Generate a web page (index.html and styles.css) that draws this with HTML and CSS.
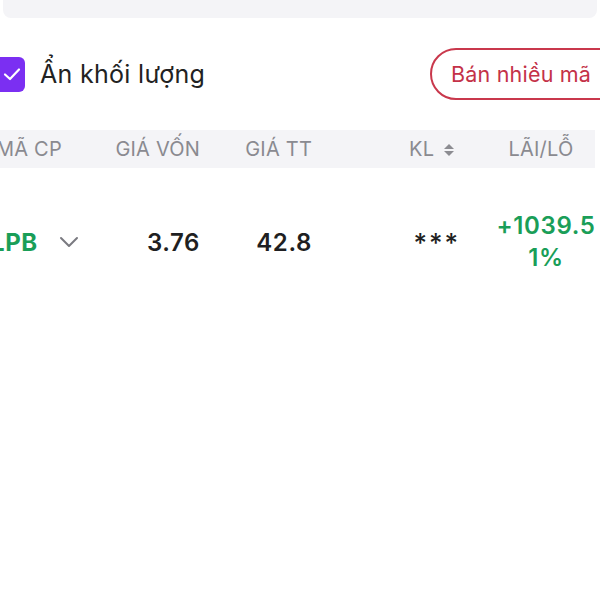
FILE: index.html
```html
<!DOCTYPE html>
<html lang="vi">
  <head>
    <meta charset="UTF-8" />
    <meta name="viewport" content="width=device-width, initial-scale=1.0" />
    <title>Danh mục</title>
    <link rel="stylesheet" href="styles.css">
  </head>
  <body>
    <div class="page">
      <div class="search-bar"></div>

      <div class="toolbar">
        <label class="check">
          <span class="check-box">
            <svg width="22" height="22" viewBox="0 0 22 22">
              <path d="M4 11.5 L9 16 L18 6.5" fill="none" stroke="#fff" stroke-width="2.2" stroke-linecap="round" stroke-linejoin="round" />
            </svg>
          </span>
          <span class="check-text">Ẩn khối lượng</span>
        </label>
        <button class="btn-sell">Bán nhiều mã</button>
      </div>

      <div class="table">
        <div class="row head">
          <div class="cell c-code">MÃ CP</div>
          <div class="cell c-cost">GIÁ VỐN</div>
          <div class="cell c-price">GIÁ TT</div>
          <div class="cell c-vol">
            KL
            <svg class="sort" width="12" height="14" viewBox="0 0 12 14">
              <path d="M6 1 L11 6 L1 6 Z" fill="#8c8c92" />
              <path d="M6 13 L11 8 L1 8 Z" fill="#8c8c92" />
            </svg>
          </div>
          <div class="cell c-pl">LÃI/LỖ</div>
        </div>

        <div class="row item">
          <div class="cell c-code">
            <span class="ticker">LPB</span>
            <svg class="chev" width="20" height="12" viewBox="0 0 20 12">
              <path d="M2 2 L10 10 L18 2" fill="none" stroke="#7a7a80" stroke-width="2" stroke-linecap="round" stroke-linejoin="round" />
            </svg>
          </div>
          <div class="cell c-cost">3.76</div>
          <div class="cell c-price">42.8</div>
          <div class="cell c-vol stars">***</div>
          <div class="cell c-pl up">+1039.51%</div>
        </div>
      </div>
    </div>
  </body>
</html>
```

FILE: styles.css
```css
* {
  margin: 0;
  padding: 0;
  box-sizing: border-box;
}

body {
  background: #fff;
  font-family: Inter, "Noto Sans", "Liberation Sans", sans-serif;
  color: #1f1f22;
  overflow: hidden;
}

/* trang bị cắt hai bên, lùi sang trái 10px */
.page {
  width: 640px;
  margin-left: -10px;
}

.search-bar {
  height: 18px;
  margin: 0 33px 0 13px;
  background: #f4f4f7;
  border-radius: 0 0 8px 8px;
}

.toolbar {
  display: flex;
  align-items: center;
  justify-content: space-between;
  margin-top: 30px;
  height: 52px;
}

.check {
  display: flex;
  align-items: center;
  gap: 15px;
}

.check-box {
  width: 35px;
  height: 35px;
  border-radius: 6px;
  background: #7b2ff2;
  display: flex;
  align-items: center;
  justify-content: center;
  padding-left: 8px;
}

.check-text {
  font-size: 25px;
  color: #222;
  letter-spacing: 0.3px;
}

.btn-sell {
  font-family: inherit;
  height: 52px;
  width: 200px;
  border: 2px solid #c9384c;
  border-radius: 26px;
  background: #fff;
  color: #c43248;
  font-size: 21.5px;
  letter-spacing: 0.2px;
  text-align: left;
  padding-left: 19px;
}

.table {
  margin-top: 30px;
}

.row {
  display: flex;
  align-items: center;
}

.head {
  height: 38px;
  width: 605px;
  background: #f4f4f7;
  color: #8a8a90;
  font-size: 20px;
  letter-spacing: 0.2px;
}

.cell {
  flex: none;
}

.c-code {
  width: 110px;
  display: flex;
  align-items: center;
}
.head .c-code {
  padding-left: 6px;
}

.c-cost {
  width: 100px;
  text-align: right;
}
.c-price {
  width: 112px;
  text-align: right;
}
.c-vol {
  width: 168px;
  text-align: right;
  padding-right: 20px;
}
.head .c-vol {
  padding-right: 25px;
}
.c-pl {
  width: 132px;
  text-align: center;
  padding: 0 14px;
}
.head .c-pl {
  padding-right: 24px;
}

.sort {
  margin-left: 3px;
  vertical-align: -1px;
}

.item {
  padding: 42px 0 20px;
  font-size: 24px;
  font-weight: 600;
  letter-spacing: 0.6px;
}

.ticker {
  color: #1a9e58;
  font-weight: 700;
  padding-left: 1px;
}

.chev {
  margin-left: 21px;
}

.stars {
  font-weight: 500;
  font-size: 26px;
  letter-spacing: 2px;
}

.up {
  color: #1a9e58;
  line-height: 32px;
  word-break: break-all;
}
```
